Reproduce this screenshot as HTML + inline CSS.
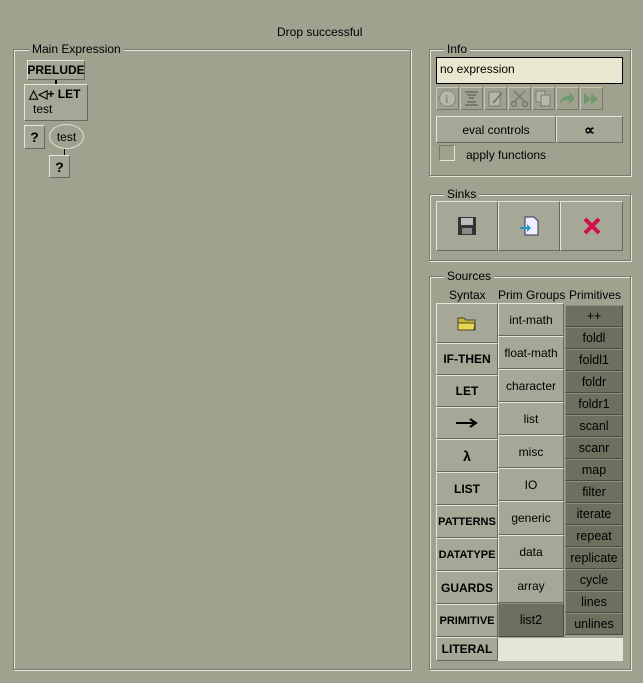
<!DOCTYPE html><html><head><style>
*{box-sizing:border-box;margin:0;padding:0}
body{width:643px;height:683px;background:#a1a190;font-family:"Liberation Sans",sans-serif;font-size:12px;color:#000;position:relative;overflow:hidden}
.a{position:absolute}
.g{position:absolute;border:1px solid #7a7a6c;box-shadow:1px 1px 0 #e8e8d8,inset 1px 1px 0 #e8e8d8}
.t{position:absolute;background:#a1a190;padding:0 3px;font-size:12px;line-height:12px}
.b{position:absolute;background:#a7a797;border:1px solid;border-color:#e6e6d6 #6a6a5c #6a6a5c #e6e6d6;display:flex;align-items:center;justify-content:center;font-size:12px}
.d{background:#6f6f5f;border-color:#8f8f7f #4a4a3e #4a4a3e #8f8f7f;font-size:12.5px}
.k{font-weight:bold;font-family:"Liberation Sans",sans-serif;font-size:12px;letter-spacing:0}
.ic{position:absolute;width:23px;height:23px;border:1px solid;border-color:#c8c8b8 #7a7a6c #7a7a6c #c8c8b8;background:#a1a190}
</style></head><body>
<div class="a" style="left:277px;top:25px">Drop successful</div>

<div class="g" style="left:13px;top:49px;width:398px;height:621px"></div>
<div class="t" style="left:29px;top:43px">Main Expression</div>
<div class="b k" style="left:27px;top:60px;width:58px;height:20px">PRELUDE</div>
<div class="a" style="left:55px;top:80px;width:2px;height:4px;background:#000"></div>
<div class="b" style="left:24px;top:84px;width:64px;height:37px;display:block;padding:2px 0 0 4px"><div class="k">△◁+ LET</div><div style="margin-top:1px;padding-left:4px">test</div></div>
<div class="b k" style="left:24px;top:125px;width:21px;height:24px;font-size:14px">?</div>
<div class="a" style="left:49px;top:124px;width:35px;height:25px;border:1px solid #e0e0d0;border-radius:50%;display:flex;align-items:center;justify-content:center">test</div>
<div class="b k" style="left:49px;top:155px;width:21px;height:23px;font-size:14px">?</div>
<div class="a" style="left:64px;top:149px;width:1px;height:6px;background:#000"></div>

<div class="g" style="left:429px;top:49px;width:202px;height:127px"></div>
<div class="t" style="left:444px;top:43px">Info</div>
<div class="a" style="left:436px;top:57px;width:187px;height:27px;background:#e8e8d0;border:1px solid #000;padding:4px 3px">no expression</div>
<div class="ic" style="left:436px;top:87px"><svg width="21" height="21"><circle cx="10.5" cy="10.5" r="8" fill="#b8b8a8" stroke="#8a8a7a"/><text x="8" y="15" font-size="12" font-weight="bold" fill="#8a8a7a" font-family="Liberation Serif">i</text></svg></div>
<div class="ic" style="left:460px;top:87px"><svg width="21" height="21" fill="none" stroke="#7a7a6c" stroke-width="2"><path d="M4 4h13M4 17h13M6 7h9M6 14h9M8 10h5"/></svg></div>
<div class="ic" style="left:484px;top:87px"><svg width="21" height="21"><rect x="4" y="4" width="11" height="14" fill="#b8b8a8" stroke="#7a7a6c"/><path d="M8 15l9-10" stroke="#7a7a6c" stroke-width="2"/></svg></div>
<div class="ic" style="left:508px;top:87px"><svg width="21" height="21" fill="none" stroke="#7a7a6c" stroke-width="1.5"><path d="M5 3l11 11M16 3L5 14"/><circle cx="5" cy="16" r="2.5"/><circle cx="16" cy="16" r="2.5"/></svg></div>
<div class="ic" style="left:532px;top:87px"><svg width="21" height="21" fill="#b8b8a8" stroke="#7a7a6c"><rect x="3" y="3" width="9" height="11"/><rect x="8" y="7" width="9" height="11"/></svg></div>
<div class="ic" style="left:556px;top:87px"><svg width="21" height="21"><path d="M3 16c0-6 4-8 9-8V4l6 6-6 6v-4c-4 0-7 1-9 4z" fill="#6f9a6f"/></svg></div>
<div class="ic" style="left:580px;top:87px"><svg width="21" height="21" fill="#6f9a6f"><path d="M3 5l7 6-7 6zM10 5l7 6-7 6z"/></svg></div>
<div class="b" style="left:436px;top:116px;width:120px;height:27px">eval controls</div>
<div class="b" style="left:556px;top:116px;width:67px;height:27px;font-weight:bold;font-size:15px">∝</div>
<div class="a" style="left:439px;top:145px;width:16px;height:16px;border:1px solid;border-color:#7a7a6c #e6e6d6 #e6e6d6 #7a7a6c"></div>
<div class="a" style="left:466px;top:148px">apply functions</div>

<div class="g" style="left:429px;top:194px;width:202px;height:67px"></div>
<div class="t" style="left:444px;top:188px">Sinks</div>
<div class="b" style="left:436px;top:201px;width:62px;height:50px"><svg width="20" height="20"><rect x="1" y="1" width="18" height="18" fill="#333"/><rect x="4" y="2" width="12" height="7" fill="#bbb"/><rect x="5" y="12" width="10" height="6" fill="#888"/></svg></div>
<div class="b" style="left:498px;top:201px;width:62px;height:50px"><svg width="20" height="20"><path d="M6 1h9l4 4v14H6z" fill="#eef" stroke="#335"/><path d="M1 11h7V8l4 4-4 4v-3H1z" fill="#29c"/></svg></div>
<div class="b" style="left:560px;top:201px;width:63px;height:50px"><svg width="20" height="20"><path d="M3 3l14 14M17 3L3 17" stroke="#d0104a" stroke-width="4"/></svg></div>

<div class="g" style="left:429px;top:276px;width:202px;height:394px"></div>
<div class="t" style="left:444px;top:270px">Sources</div>
<div class="a" style="left:449px;top:288px">Syntax</div>
<div class="a" style="left:498px;top:288px">Prim Groups</div>
<div class="a" style="left:569px;top:288px">Primitives</div>

<div class="b" style="left:436px;top:303px;width:62px;height:40px"><svg width="20" height="16"><path d="M1 3h6l2 2h9v10H1z" fill="#c8b838" stroke="#443"/><path d="M1 8h17l-1 7H1z" fill="#e8d850" stroke="#443"/></svg></div>
<div class="b k" style="left:436px;top:343px;width:62px;height:32px">IF-THEN</div>
<div class="b k" style="left:436px;top:375px;width:62px;height:32px">LET</div>
<div class="b" style="left:436px;top:407px;width:62px;height:32px"><svg width="24" height="10"><path d="M1 5h20M15 1l6 4-6 4" stroke="#000" stroke-width="2" fill="none"/></svg></div>
<div class="b k" style="left:436px;top:439px;width:62px;height:33px;font-size:14px">λ</div>
<div class="b k" style="left:436px;top:472px;width:62px;height:33px">LIST</div>
<div class="b k" style="left:436px;top:505px;width:62px;height:33px;font-size:11px">PATTERNS</div>
<div class="b k" style="left:436px;top:538px;width:62px;height:33px;font-size:11px">DATATYPE</div>
<div class="b k" style="left:436px;top:571px;width:62px;height:33px">GUARDS</div>
<div class="b k" style="left:436px;top:604px;width:62px;height:33px;font-size:11px">PRIMITIVE</div>
<div class="b k" style="left:436px;top:637px;width:62px;height:24px">LITERAL</div>

<div class="b" style="left:498px;top:303px;width:66px;height:33px">int-math</div>
<div class="b" style="left:498px;top:336px;width:66px;height:33px">float-math</div>
<div class="b" style="left:498px;top:369px;width:66px;height:33px">character</div>
<div class="b" style="left:498px;top:402px;width:66px;height:33px">list</div>
<div class="b" style="left:498px;top:435px;width:66px;height:33px">misc</div>
<div class="b" style="left:498px;top:468px;width:66px;height:33px">IO</div>
<div class="b" style="left:498px;top:501px;width:66px;height:34px">generic</div>
<div class="b" style="left:498px;top:535px;width:66px;height:34px">data</div>
<div class="b" style="left:498px;top:569px;width:66px;height:34px">array</div>
<div class="b d" style="left:498px;top:603px;width:66px;height:34px">list2</div>
<div class="a" style="left:498px;top:638px;width:125px;height:23px;background:#e6e6d6"></div>

<div class="b d" style="left:565px;top:305px;width:58px;height:22px">++</div>
<div class="b d" style="left:565px;top:327px;width:58px;height:22px">foldl</div>
<div class="b d" style="left:565px;top:349px;width:58px;height:22px">foldl1</div>
<div class="b d" style="left:565px;top:371px;width:58px;height:22px">foldr</div>
<div class="b d" style="left:565px;top:393px;width:58px;height:22px">foldr1</div>
<div class="b d" style="left:565px;top:415px;width:58px;height:22px">scanl</div>
<div class="b d" style="left:565px;top:437px;width:58px;height:22px">scanr</div>
<div class="b d" style="left:565px;top:459px;width:58px;height:22px">map</div>
<div class="b d" style="left:565px;top:481px;width:58px;height:22px">filter</div>
<div class="b d" style="left:565px;top:503px;width:58px;height:22px">iterate</div>
<div class="b d" style="left:565px;top:525px;width:58px;height:22px">repeat</div>
<div class="b d" style="left:565px;top:547px;width:58px;height:22px">replicate</div>
<div class="b d" style="left:565px;top:569px;width:58px;height:22px">cycle</div>
<div class="b d" style="left:565px;top:591px;width:58px;height:22px">lines</div>
<div class="b d" style="left:565px;top:613px;width:58px;height:22px">unlines</div>
</body></html>
